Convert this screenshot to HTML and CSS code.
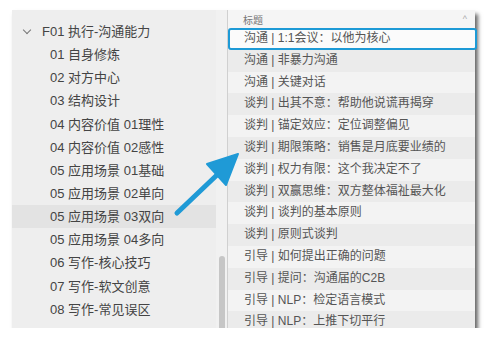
FILE: index.html
```html
<!DOCTYPE html>
<html lang="zh-CN">
<head>
  <meta charset="UTF-8" />
  <title>沟通能力</title>
  <link rel="stylesheet" href="styles.css">
</head>
<body>
  <div class="window">
    <div class="sidebar">
      <ul class="tree">
        <li class="group"><span class="chevron"></span>F01 执行-沟通能力</li>
        <li>01 自身修炼</li>
        <li>02 对方中心</li>
        <li>03 结构设计</li>
        <li>04 内容价值 01理性</li>
        <li>04 内容价值 02感性</li>
        <li>05 应用场景 01基础</li>
        <li>05 应用场景 02单向</li>
        <li class="active">05 应用场景 03双向</li>
        <li>05 应用场景 04多向</li>
        <li>06 写作-核心技巧</li>
        <li>07 写作-软文创意</li>
        <li>08 写作-常见误区</li>
      </ul>
      <div class="scrollbar"><div class="thumb"></div></div>
    </div>

    <div class="notes">
      <div class="notes-head">
        <span>标题</span>
        <span class="sort">^</span>
      </div>
      <ul class="rows">
        <li class="selected">沟通 | 1:1会议：以他为核心</li>
        <li>沟通 | 非暴力沟通</li>
        <li>沟通 | 关键对话</li>
        <li>谈判 | 出其不意：帮助他说谎再揭穿</li>
        <li>谈判 | 锚定效应：定位调整偏见</li>
        <li>谈判 | 期限策略：销售是月底要业绩的</li>
        <li>谈判 | 权力有限：这个我决定不了</li>
        <li>谈判 | 双赢思维：双方整体福祉最大化</li>
        <li>谈判 | 谈判的基本原则</li>
        <li>谈判 | 原则式谈判</li>
        <li>引导 | 如何提出正确的问题</li>
        <li>引导 | 提问：沟通届的C2B</li>
        <li>引导 | NLP：检定语言模式</li>
        <li>引导 | NLP：上推下切平行</li>
      </ul>
    </div>

    <!-- annotation arrow drawn over the screenshot -->
    <svg class="arrow" width="463" height="318" viewBox="0 0 463 318">
      <line x1="165" y1="203" x2="206" y2="164" stroke="#1f9ad6" stroke-width="5" stroke-linecap="round" />
      <polygon points="226,144 195,154 214,175" fill="#1f9ad6" stroke="#1f9ad6" stroke-width="2" stroke-linejoin="round" />
    </svg>
  </div>
</body>
</html>
```

FILE: styles.css
```css
body {
  margin: 0;
  background: #fff;
  font-family: "Liberation Sans", "Noto Sans CJK SC", sans-serif;
}

ul {
  list-style: none;
  margin: 0;
  padding: 0;
}

.window {
  position: relative;
  display: flex;
  width: 463px;
  height: 318px;
  margin: 10px 0 0 12px;
  box-shadow: 3px 4px 4px rgba(0, 0, 0, 0.6);
}

.sidebar {
  display: flex;
  width: 215px;
  background: #eeeeee;
  border-right: 1px solid #d0d0d0;
  overflow: hidden;
}

.tree {
  flex: 1;
  padding-top: 10px;
  font-size: 13px;
  color: #444;
}

.tree li {
  height: 23.15px;
  line-height: 23px;
  padding-left: 38px;
  white-space: nowrap;
}

.tree .group {
  padding-left: 10px;
  display: flex;
  align-items: center;
}

.tree .active {
  background: #e3e3e3;
}

.chevron {
  width: 5px;
  height: 5px;
  margin: 0 12px 3px 2px;
  border-right: 1.5px solid #777;
  border-bottom: 1.5px solid #777;
  transform: rotate(45deg);
}

.scrollbar {
  width: 11px;
  display: flex;
  flex-direction: column;
  justify-content: flex-end;
  background: #f1f1f1;
}

.thumb {
  height: 72px;
  margin: 0 2px 0 3px;
  border-radius: 3px 3px 0 0;
  background: #c6c6c6;
}

.notes {
  flex: 1;
  background: #f3f3f3;
}

.notes-head {
  display: flex;
  justify-content: space-between;
  align-items: center;
  height: 18px;
  padding: 0 8px 0 15px;
  font-size: 10px;
  color: #777;
  background: #f5f5f5;
}

.sort {
  color: #aaa;
  font-size: 9px;
}

.rows {
  font-size: 12px;
  color: #555;
}

.rows li {
  height: 21.8px;
  line-height: 21px;
  padding-left: 16px;
  white-space: nowrap;
  box-sizing: border-box;
}

.rows li:nth-child(even) {
  background: #ebebeb;
}

.rows .selected {
  margin-right: -2px;
  padding-left: 14px;
  line-height: 17px;
  background: #fbfbfb;
  border: 2.5px solid #1d9ad6;
  border-radius: 3px;
}

.arrow {
  position: absolute;
  left: 0;
  top: 0;
  pointer-events: none;
}
```
